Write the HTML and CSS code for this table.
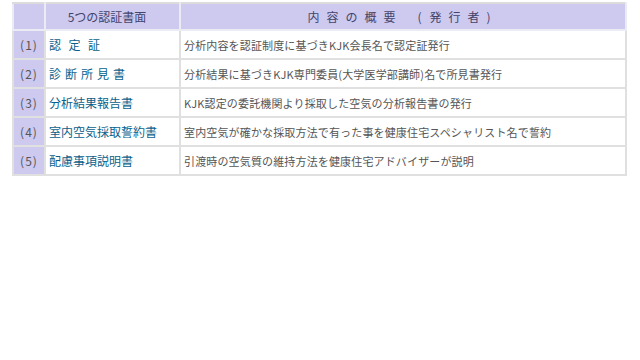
FILE: index.html
```html
<!DOCTYPE html>
<html lang="ja">
<head>
<meta charset="utf-8">
<link rel="stylesheet" href="styles.css">
</head>
<body>
<div class="wrap">
<table class="docs">
  <colgroup>
    <col class="c-no">
    <col class="c-name">
    <col class="c-desc">
  </colgroup>
  <thead>
    <tr>
      <th class="h-no"></th>
      <th class="h-name">5つの認証書面</th>
      <th class="h-desc"><span class="h-spaced">内容の概要</span><span class="h-paren"><span class="h-open">(</span><span class="h-spaced">発行者</span>)</span></th>
    </tr>
  </thead>
  <tbody>
    <tr>
      <td class="no">(1)</td>
      <td class="name"><span class="sp-wide">認定証</span></td>
      <td class="desc">分析内容を認証制度に基づきKJK会長名で認定証発行</td>
    </tr>
    <tr>
      <td class="no">(2)</td>
      <td class="name"><span class="sp-mid">診断所見書</span></td>
      <td class="desc">分析結果に基づきKJK専門委員(大学医学部講師)名で所見書発行</td>
    </tr>
    <tr>
      <td class="no">(3)</td>
      <td class="name">分析結果報告書</td>
      <td class="desc">KJK認定の委託機関より採取した空気の分析報告書の発行</td>
    </tr>
    <tr>
      <td class="no">(4)</td>
      <td class="name">室内空気採取誓約書</td>
      <td class="desc">室内空気が確かな採取方法で有った事を健康住宅スペシャリスト名で誓約</td>
    </tr>
    <tr>
      <td class="no">(5)</td>
      <td class="name">配慮事項説明書</td>
      <td class="desc">引渡時の空気質の維持方法を健康住宅アドバイザーが説明</td>
    </tr>
  </tbody>
</table>
</div>
</body>
</html>
```

FILE: styles.css
```css
html, body {
  margin: 0;
  padding: 0;
  background: #ffffff;
}
body {
  font-family: "Noto Sans CJK JP", "Noto Sans", sans-serif;
  font-size: 12px;
  color: #555555;
}
.wrap {
  padding: 2px 0 0 12px;
}
.docs {
  width: 615px;
  border-collapse: collapse;
  table-layout: fixed;
  border: 2px solid #dcdcdc;
}
.c-no { width: 32px; }
.c-name { width: 135px; }
.docs th,
.docs td {
  border: 2px solid #e0e0e0;
  padding: 0 3px;
  line-height: 14px;
  white-space: nowrap;
  overflow: hidden;
}
.docs thead th {
  height: 25px;
  background: #cdc9ef;
  color: #44446a;
  font-weight: normal;
  text-align: center;
  border-color: #ebebf3;
  border-top-color: #dcdcdc;
}
.docs thead th.h-name {
  padding-right: 14px;
}
.docs tbody td {
  height: 27px;
}
.h-spaced {
  letter-spacing: 7px;
}
.h-paren {
  margin-left: 15px;
  margin-right: 8px;
}
.h-open {
  letter-spacing: 8px;
}
.no {
  background: #cdc9ef;
  text-align: center;
  color: #555555;
  letter-spacing: 1px;
}
.name {
  color: #0a5f8c;
}
.desc {
  font-size: 11px;
  letter-spacing: 0.15px;
  color: #555555;
}
.sp-wide {
  letter-spacing: 7.5px;
}
.sp-mid {
  letter-spacing: 4px;
}
```
